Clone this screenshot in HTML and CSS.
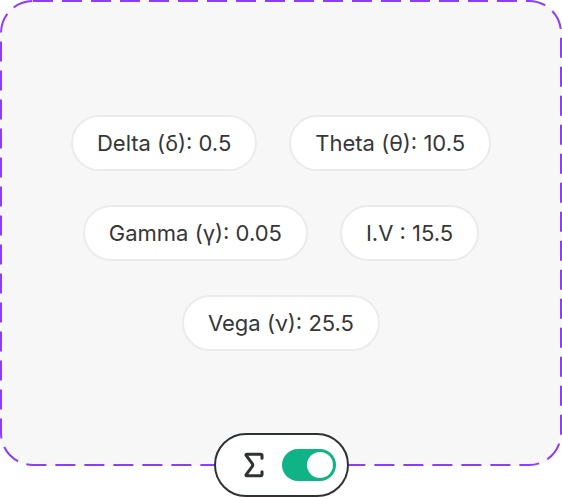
FILE: index.html
```html
<!DOCTYPE html>
<html>
<head>
<meta charset="UTF-8"/>
<link rel="stylesheet" href="styles.css">
</head>
<body>
<div class="panel">
  <div class="greeks">
    <svg class="dash" width="562" height="466"><rect x="1" y="1" width="560" height="464" rx="32" ry="32"/></svg>
    <div class="row">
      <span class="chip">Delta (δ): 0.5</span>
      <span class="chip">Theta (θ): 10.5</span>
    </div>
    <div class="row">
      <span class="chip">Gamma (γ): 0.05</span>
      <span class="chip">I.V : 15.5</span>
    </div>
    <div class="row">
      <span class="chip">Vega (ν): 25.5</span>
    </div>
  </div>
  <div class="switcher">
    <svg class="sigma" width="32" height="32" viewBox="0 0 24 24"><path d="M18 7V5a1 1 0 0 0-1-1H6.5a.5.5 0 0 0-.4.8l4.5 6a2 2 0 0 1 0 2.4l-4.5 6a.5.5 0 0 0 .4.8H17a1 1 0 0 0 1-1v-2"/></svg>
    <span class="toggle"><span class="knob"></span></span>
  </div>
</div>
</body>
</html>
```
FILE: styles.css
```css
html, body{
  margin:0;
  padding:0;
  background:#fff;
}
body{
  font-family:Inter, "Noto Sans", sans-serif;
  color:#363636;
}
.panel{
  width:562px;
  display:flex;
  flex-direction:column;
  align-items:center;
}
.greeks{
  position:relative;
  width:562px;
  height:466px;
  box-sizing:border-box;
  background:#f7f7f7;
  border-radius:32px;
  display:flex;
  flex-direction:column;
  justify-content:center;
  align-items:center;
  gap:34px;
}
.dash{
  position:absolute;
  left:0;
  top:0;
  pointer-events:none;
}
.dash rect{
  fill:none;
  stroke:#8c3ff2;
  stroke-width:2;
  stroke-dasharray:20 9;
}
.row{
  display:flex;
  justify-content:center;
  gap:32px;
}
.chip{
  height:56px;
  box-sizing:border-box;
  display:flex;
  align-items:center;
  padding:0 24px;
  background:#fff;
  border:2px solid #ebebeb;
  border-radius:28px;
  font-size:22px;
}
.switcher{
  position:relative;
  z-index:1;
  margin-top:-33px;
  height:64px;
  box-sizing:border-box;
  display:flex;
  align-items:center;
  gap:12px;
  padding:0 11px 0 22px;
  background:#fff;
  border:2px solid #2f3235;
  border-radius:32px;
}
.sigma{
  fill:none;
  stroke:#2f3235;
  stroke-width:2.3;
  stroke-linecap:round;
  stroke-linejoin:round;
}
.toggle{
  width:54px;
  height:32px;
  box-sizing:border-box;
  padding:3px;
  border-radius:16px;
  background:#0fb386;
  display:flex;
  justify-content:flex-end;
}
.knob{
  width:26px;
  height:26px;
  border-radius:50%;
  background:#fff;
}
```
